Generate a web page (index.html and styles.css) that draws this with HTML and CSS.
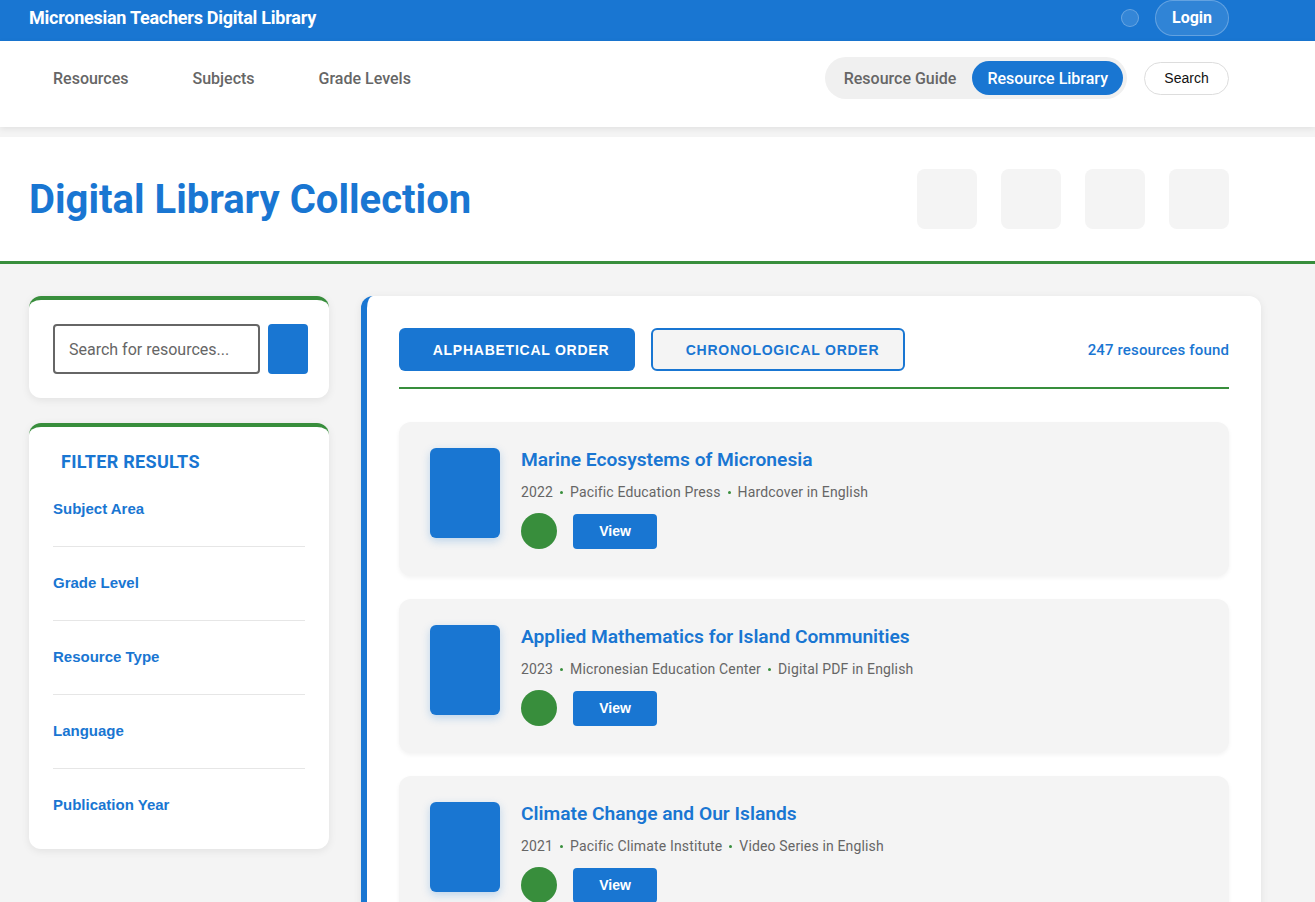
FILE: index.html
```html
<!DOCTYPE html>
<html lang="en">
<head>
<meta charset="utf-8">
<title>Micronesian Teachers Digital Library</title>
<link rel="stylesheet" href="styles.css">
</head>
<body>
<header class="topbar">
  <div class="topbar-inner">
    <div class="brand">Micronesian Teachers Digital Library</div>
    <div class="top-actions">
      <span class="dot-btn"></span>
      <button class="login">Login</button>
    </div>
  </div>
</header>
<nav class="navbar">
  <div class="nav-inner">
    <ul class="nav-links">
      <li>Resources</li>
      <li>Subjects</li>
      <li>Grade Levels</li>
    </ul>
    <div class="nav-right">
      <div class="toggle">
        <span class="toggle-opt">Resource Guide</span>
        <span class="toggle-opt active">Resource Library</span>
      </div>
      <button class="search-btn">Search</button>
    </div>
  </div>
</nav>
<section class="page-head">
  <div class="head-inner">
    <h1>Digital Library Collection</h1>
    <div class="head-tiles">
      <span class="tile"></span><span class="tile"></span><span class="tile"></span><span class="tile"></span>
    </div>
  </div>
</section>
<main class="layout">
  <aside class="sidebar">
    <div class="card search-card">
      <input class="search-input" type="text" placeholder="Search for resources...">
      <button class="search-go"></button>
    </div>
    <div class="card filter-card">
      <h2>FILTER RESULTS</h2>
      <button class="filter-item">Subject Area</button>
      <button class="filter-item">Grade Level</button>
      <button class="filter-item">Resource Type</button>
      <button class="filter-item">Language</button>
      <button class="filter-item last">Publication Year</button>
    </div>
  </aside>
  <section class="results">
    <div class="sort-row">
      <button class="sort-btn primary">ALPHABETICAL ORDER</button>
      <button class="sort-btn outline">CHRONOLOGICAL ORDER</button>
      <span class="count">247 resources found</span>
    </div>
    <div class="list">
      <article class="item">
        <div class="cover"></div>
        <div class="info">
          <h3>Marine Ecosystems of Micronesia</h3>
          <p class="meta">2022<span class="sep"></span>Pacific Education Press<span class="sep"></span>Hardcover in English</p>
          <div class="actions"><span class="badge"></span><button class="view">View</button></div>
        </div>
      </article>
      <article class="item">
        <div class="cover"></div>
        <div class="info">
          <h3>Applied Mathematics for Island Communities</h3>
          <p class="meta">2023<span class="sep"></span>Micronesian Education Center<span class="sep"></span>Digital PDF in English</p>
          <div class="actions"><span class="badge"></span><button class="view">View</button></div>
        </div>
      </article>
      <article class="item">
        <div class="cover"></div>
        <div class="info">
          <h3>Climate Change and Our Islands</h3>
          <p class="meta">2021<span class="sep"></span>Pacific Climate Institute<span class="sep"></span>Video Series in English</p>
          <div class="actions"><span class="badge"></span><button class="view">View</button></div>
        </div>
      </article>
    </div>
  </section>
</main>
</body>
</html>
```
FILE: styles.css
```css
* { box-sizing: border-box; }
html, body { margin: 0; padding: 0; }
body {
  background: #f4f4f4;
  font-family: Roboto, "Noto Sans", sans-serif;
  color: #333;
}
button { font-family: "Liberation Sans", Arial, sans-serif; cursor: pointer; }

.topbar { background: #1976d2; height: 41px; }
.topbar-inner {
  width: 1200px; margin-left: 29px; height: 35px;
  display: flex; align-items: center; justify-content: space-between;
}
.brand { color: #fff; font-weight: 700; font-size: 18px; letter-spacing: -0.25px; }
.top-actions { display: flex; align-items: center; gap: 16px; }
.dot-btn {
  width: 18px; height: 18px; border-radius: 50%;
  background: rgba(255,255,255,0.12); border: 1px solid rgba(255,255,255,0.25);
}
.login {
  height: 36px; padding: 0 16px; border-radius: 18px;
  background: rgba(255,255,255,0.1); border: 1px solid rgba(255,255,255,0.25);
  color: #fff; font-family: Roboto, sans-serif; font-weight: 700; font-size: 16px;
}

.navbar { background: #fff; height: 86px; padding-bottom: 12px; box-shadow: 0 2px 6px rgba(0,0,0,0.08); position: relative; }
.nav-inner {
  width: 1200px; margin-left: 29px; height: 100%;
  display: flex; align-items: center; justify-content: space-between;
}
.nav-links { list-style: none; margin: 0; padding: 0 0 0 24px; display: flex; gap: 64px; }
.nav-links li { font-size: 16px; font-weight: 500; color: #666; }
.nav-right { display: flex; align-items: center; gap: 17px; }
.toggle { display: flex; background: #f0f0f0; border-radius: 21px; padding: 4px; height: 42px; }
.toggle-opt {
  display: flex; align-items: center; padding: 0 15px; height: 34px; border-radius: 17px;
  font-size: 16px; font-weight: 500; color: #666;
}
.toggle-opt.active { background: #1976d2; color: #fff; margin-left: 1px; }
.search-btn {
  width: 85px; height: 33px; background: #fff; border: 1px solid #ddd; border-radius: 17px;
  font-size: 14px; color: #111;
}

.page-head { background: #fff; margin-top: 10px; border-bottom: 3px solid #388e3c; }
.head-inner {
  width: 1200px; margin-left: 29px; height: 124px;
  display: flex; align-items: center; justify-content: space-between;
}
.page-head h1 { margin: 0; font-size: 40px; font-weight: 700; color: #1976d2; }
.head-tiles { display: flex; gap: 24px; }
.tile { width: 60px; height: 60px; border-radius: 8px; background: #f4f4f4; }

.layout {
  display: grid; grid-template-columns: 300px 900px; gap: 32px;
  padding: 32px 0 0 29px; align-items: start;
}
.sidebar { display: flex; flex-direction: column; gap: 25px; }
.card {
  background: #fff; border-radius: 12px; border-top: 4px solid #388e3c;
  box-shadow: 0 2px 8px rgba(0,0,0,0.08);
}
.search-card { display: flex; gap: 8px; padding: 24px 21px 24px 24px; }
.search-input {
  flex: 1; min-width: 0; height: 50px; border: 2px solid #666; border-radius: 4px;
  padding: 0 14px; font-family: Roboto, sans-serif; font-size: 16px; color: #333;
}
.search-input::placeholder { color: #666; }
.search-go { width: 40px; height: 50px; border: none; border-radius: 4px; background: #1976d2; }

.filter-card { padding: 24px 24px 7px; display: flex; flex-direction: column; }
.filter-card h2 {
  margin: 0; padding-left: 8px; font-size: 18px; line-height: 22px; font-weight: 700;
  letter-spacing: 0.3px; color: #1976d2;
}
.filter-item {
  text-align: left; background: none; border: none; border-bottom: 1px solid #e6e6e6;
  padding: 27px 0 28px; font-size: 15px; line-height: 18px; font-weight: 700; color: #1976d2;
}
.filter-item.last { border-bottom: none; }

.results {
  background: #fff; border-radius: 12px; border-left: 6px solid #1976d2;
  box-shadow: 0 2px 8px rgba(0,0,0,0.08); padding: 32px 32px 40px 32px; min-height: 700px;
}
.sort-row {
  display: flex; align-items: center; gap: 16px;
  padding-bottom: 16px; border-bottom: 2px solid #388e3c;
}
.sort-btn {
  height: 43px; border-radius: 6px; font-size: 14px; font-weight: 700; letter-spacing: 0.75px;
}
.sort-btn.primary { width: 236px; background: #1976d2; color: #fff; border: none; padding-left: 14px; }
.sort-btn.outline { width: 254px; background: #f4f4f4; color: #1976d2; border: 2px solid #1976d2; padding-left: 15px; }
.count { margin-left: auto; font-size: 15px; font-weight: 500; letter-spacing: 0.15px; color: #1976d2; }

.list { display: flex; flex-direction: column; gap: 23px; margin-top: 33px; }
.item {
  display: flex; gap: 21px; background: #f4f4f4; border-radius: 12px;
  padding: 26px 31px 27px; box-shadow: 0 2px 4px rgba(0,0,0,0.05);
}
.cover {
  width: 70px; height: 90px; flex: none; border-radius: 6px; background: #1976d2;
  box-shadow: 0 3px 8px rgba(25,118,210,0.25);
}
.info h3 { margin: 0; font-size: 19.2px; line-height: 24px; font-weight: 600; color: #1976d2; }
.meta {
  margin: 10px 0 11px; font-size: 14px; line-height: 20px; color: #666; letter-spacing: 0.15px;
  display: flex; align-items: center;
}
.sep { width: 3px; height: 3px; background: #388e3c; border-radius: 50%; margin: 0 7px; }
.actions { display: flex; align-items: center; gap: 16px; }
.badge { width: 36px; height: 36px; border-radius: 50%; background: #388e3c; }
.view {
  width: 84px; height: 35px; border: none; border-radius: 4px; background: #1976d2;
  color: #fff; font-size: 14px; font-weight: 700;
}
```
